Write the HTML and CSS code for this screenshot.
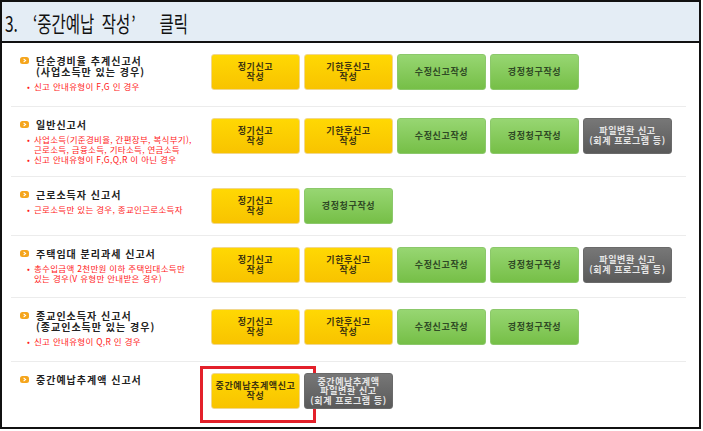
FILE: index.html
```html
<!DOCTYPE html>
<html lang="ko">
<head>
<meta charset="utf-8">
<title>중간예납 작성 클릭</title>
<link rel="stylesheet" href="styles.css">
</head>
<body>
<div class="frame">
  <div class="head"><h1 class="head-text">3. <span class="q-open">‘</span>중간예납 작성<span class="q-close">’</span> 클릭</h1></div>
  <div class="rows">
    <div class="row h64">
      <div class="info">
        <div class="title"><svg class="dot" viewBox="0 0 9 7"><rect width="9" height="7" rx="2.5" fill="#f5a51c"/><path d="M3.6 1.8 L5.6 3.5 L3.6 5.2" fill="none" stroke="#fff" stroke-width="1.1"/></svg><span>단순경비율 추계신고서<br>(사업소득만 있는 경우)</span></div>
        <div class="note"><i>•</i><span>신고 안내유형이 F,G 인 경우</span></div>
      </div>
      <div class="btns">
        <a class="btn yellow">정기신고<br>작성</a>
        <a class="btn yellow">기한후신고<br>작성</a>
        <a class="btn green">수정신고작성</a>
        <a class="btn green">경정청구작성</a>
      </div>
    </div>
    <div class="row h70">
      <div class="info">
        <div class="title"><svg class="dot" viewBox="0 0 9 7"><rect width="9" height="7" rx="2.5" fill="#f5a51c"/><path d="M3.6 1.8 L5.6 3.5 L3.6 5.2" fill="none" stroke="#fff" stroke-width="1.1"/></svg><span>일반신고서</span></div>
        <div class="note"><i>•</i><span>사업소득(기준경비율, 간편장부, 복식부기),<br>근로소득, 금융소득, 기타소득, 연금소득</span></div>
        <div class="note tight"><i>•</i><span>신고 안내유형이 F,G,Q,R 이 아닌 경우</span></div>
      </div>
      <div class="btns">
        <a class="btn yellow">정기신고<br>작성</a>
        <a class="btn yellow">기한후신고<br>작성</a>
        <a class="btn green">수정신고작성</a>
        <a class="btn green">경정청구작성</a>
        <a class="btn gray">파일변환 신고<br>(회계 프로그램 등)</a>
      </div>
    </div>
    <div class="row h59">
      <div class="info">
        <div class="title"><svg class="dot" viewBox="0 0 9 7"><rect width="9" height="7" rx="2.5" fill="#f5a51c"/><path d="M3.6 1.8 L5.6 3.5 L3.6 5.2" fill="none" stroke="#fff" stroke-width="1.1"/></svg><span>근로소득자 신고서</span></div>
        <div class="note"><i>•</i><span>근로소득만 있는 경우, 종교인근로소득자</span></div>
      </div>
      <div class="btns">
        <a class="btn yellow">정기신고<br>작성</a>
        <a class="btn green">경정청구작성</a>
      </div>
    </div>
    <div class="row h62">
      <div class="info">
        <div class="title"><svg class="dot" viewBox="0 0 9 7"><rect width="9" height="7" rx="2.5" fill="#f5a51c"/><path d="M3.6 1.8 L5.6 3.5 L3.6 5.2" fill="none" stroke="#fff" stroke-width="1.1"/></svg><span>주택임대 분리과세 신고서</span></div>
        <div class="note"><i>•</i><span>총수입금액 2천만원 이하 주택임대소득만<br>있는 경우(V 유형만 안내받은 경우)</span></div>
      </div>
      <div class="btns">
        <a class="btn yellow">정기신고<br>작성</a>
        <a class="btn yellow">기한후신고<br>작성</a>
        <a class="btn green">수정신고작성</a>
        <a class="btn green">경정청구작성</a>
        <a class="btn gray">파일변환 신고<br>(회계 프로그램 등)</a>
      </div>
    </div>
    <div class="row h64">
      <div class="info">
        <div class="title"><svg class="dot" viewBox="0 0 9 7"><rect width="9" height="7" rx="2.5" fill="#f5a51c"/><path d="M3.6 1.8 L5.6 3.5 L3.6 5.2" fill="none" stroke="#fff" stroke-width="1.1"/></svg><span>종교인소득자 신고서<br>(종교인소득만 있는 경우)</span></div>
        <div class="note"><i>•</i><span>신고 안내유형이 Q,R 인 경우</span></div>
      </div>
      <div class="btns">
        <a class="btn yellow">정기신고<br>작성</a>
        <a class="btn yellow">기한후신고<br>작성</a>
        <a class="btn green">수정신고작성</a>
        <a class="btn green">경정청구작성</a>
      </div>
    </div>
    <div class="row last">
      <div class="info">
        <div class="title"><svg class="dot" viewBox="0 0 9 7"><rect width="9" height="7" rx="2.5" fill="#f5a51c"/><path d="M3.6 1.8 L5.6 3.5 L3.6 5.2" fill="none" stroke="#fff" stroke-width="1.1"/></svg><span>중간예납추계액 신고서</span></div>
      </div>
      <div class="btns">
        <a class="btn yellow marked">중간예납추계액신고<br>작성</a>
        <a class="btn gray three">중간예납추계액<br>파일변환 신고<br>(회계 프로그램 등)</a>
      </div>
    </div>
  </div>
</div>
</body>
</html>
```

FILE: styles.css
```css
* { box-sizing: border-box; }
html, body { margin: 0; padding: 0; background: #fff; }
body { font-family: "Noto Sans CJK KR", "Noto Sans", sans-serif; }

.frame {
  width: 701px;
  height: 429px;
  border: 2px solid #111;
  display: flex;
  flex-direction: column;
}

.head {
  height: 41px;
  background: #e4edf5;
  border-bottom: 2px solid #111;
  padding-left: 3px;
  display: flex;
  align-items: center;
  flex-shrink: 0;
}
.head-text {
  margin: 0;
  font-size: 15.5px;
  line-height: 20px;
  font-weight: 400;
  color: #111;
  word-spacing: 3px;
  transform: scaleY(1.36);
  transform-origin: left center;
  white-space: pre;
}
.q-open {
  display: inline-block;
  width: 12px;
  text-align: right;
}
.q-close {
  display: inline-block;
  width: 22px;
  text-align: left;
  padding-left: 1px;
}

.rows {
  flex: 1;
  padding: 0 13px 0 9px;
  display: flex;
  flex-direction: column;
}

.row {
  display: flex;
  border-bottom: 1px solid #ececec;
  flex-shrink: 0;
}
.row.h64 { height: 64px; }
.row.h70 { height: 70px; }
.row.h59 { height: 59px; }
.row.h62 { height: 62px; }
.row.last { flex: 1; border-bottom: none; }

.info {
  width: 200px;
  padding: 12px 0 0 9px;
  flex-shrink: 0;
}
.title {
  display: flex;
  align-items: flex-start;
  font-size: 10px;
  line-height: 11px;
  font-weight: 700;
  color: #222;
  letter-spacing: 1px;
  white-space: nowrap;
}
.dot {
  width: 9px;
  height: 7px;
  margin: 2px 7px 0 0;
  flex-shrink: 0;
}
.note {
  display: flex;
  margin: 4px 0 0 7px;
  font-size: 8.5px;
  line-height: 10px;
  color: #ff1a1a;
  letter-spacing: 0.3px;
  white-space: nowrap;
}
.note.tight { margin-top: 0; }
.note i {
  font-style: normal;
  width: 7px;
  flex-shrink: 0;
}

.btns {
  display: flex;
  gap: 4px;
  padding-top: 11px;
  align-items: flex-start;
}
.btn {
  position: relative;
  width: 89px;
  height: 36px;
  border-radius: 3px;
  display: flex;
  align-items: center;
  justify-content: center;
  text-align: center;
  font-size: 9px;
  line-height: 10px;
  font-weight: 700;
  letter-spacing: 0.6px;
  white-space: nowrap;
}
.btn.yellow {
  background: linear-gradient(#ffd803, #f8c300);
  border: 1px solid #f1d78e;
  color: #40350f;
}
.btn.green {
  background: linear-gradient(#97d672, #76bf47);
  border: 1px solid #8cc86b;
  color: #2f4a25;
}
.btn.gray {
  background: linear-gradient(#777, #5a5a5a);
  border: 1px solid #6a6a6a;
  color: #e6e6e6;
}
.btn.three { overflow: hidden; line-height: 9.5px; }

.btn.marked::after {
  content: "";
  position: absolute;
  left: -12px;
  top: -8px;
  width: 110px;
  height: 51px;
  border: 3px solid #e3202a;
}
```
